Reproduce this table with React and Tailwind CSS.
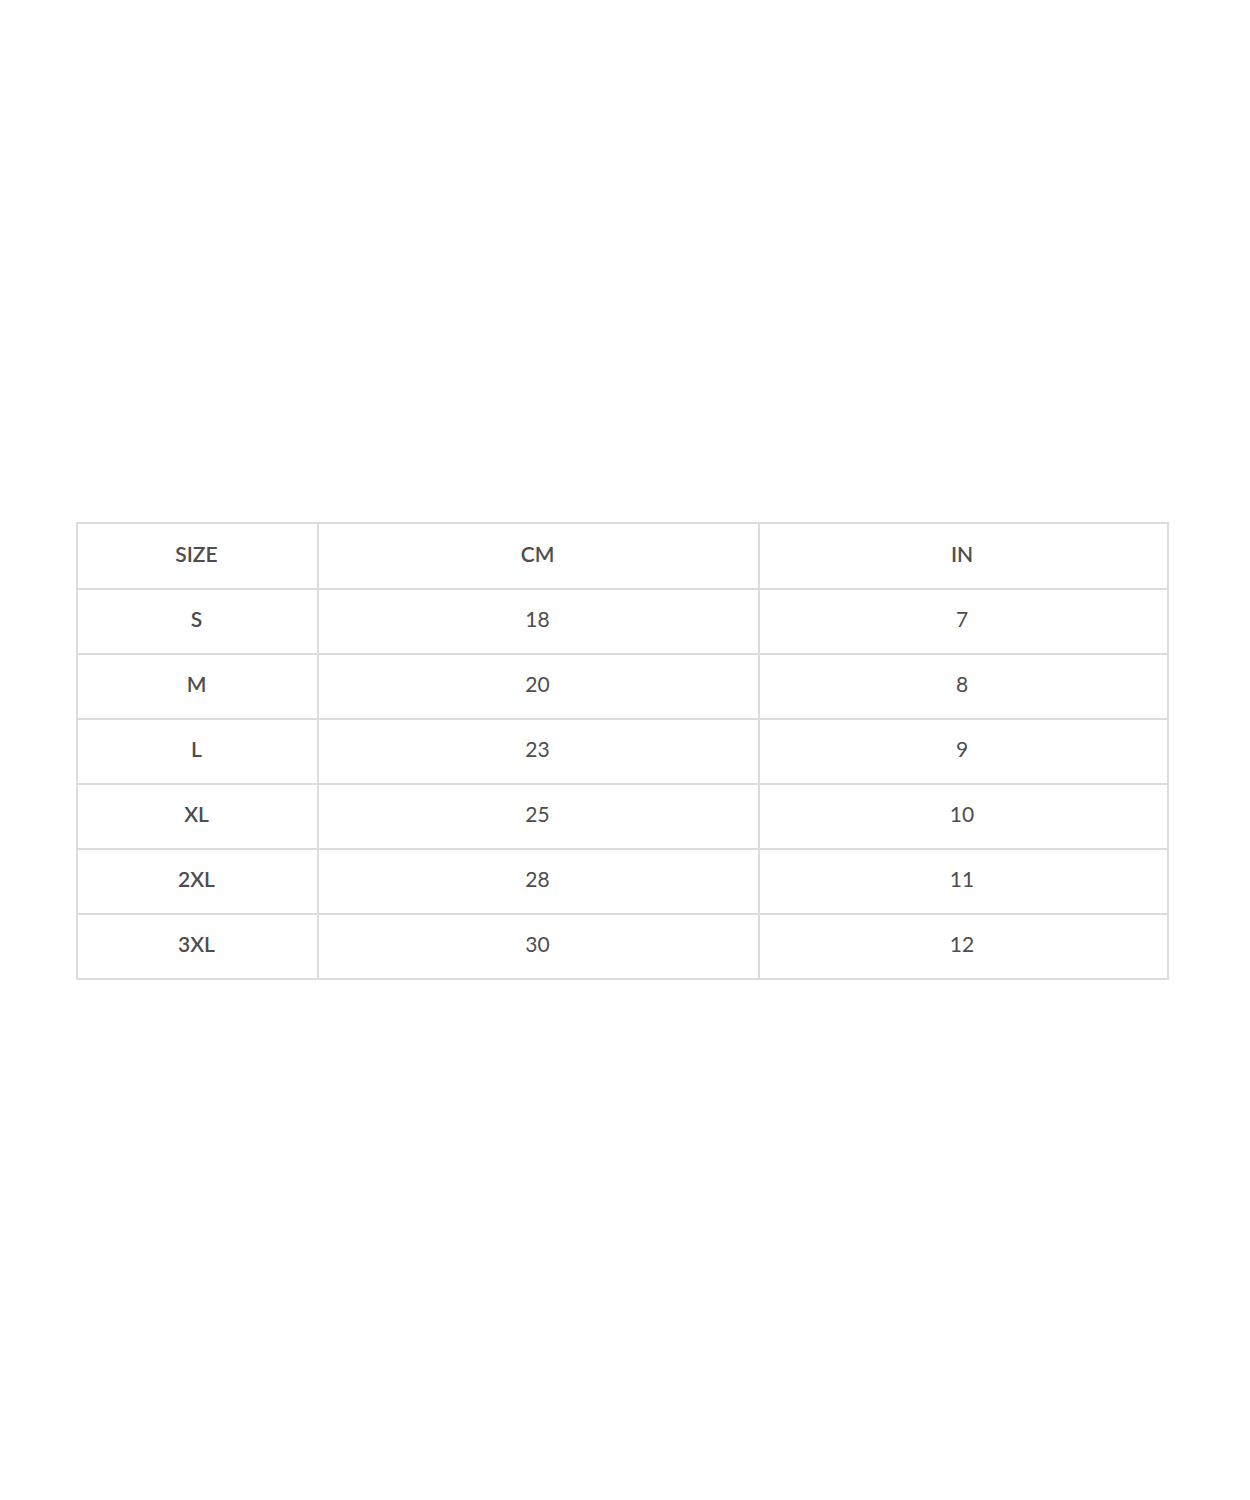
import React from "react";

const rows = [
  ["S", "18", "7"],
  ["M", "20", "8"],
  ["L", "23", "9"],
  ["XL", "25", "10"],
  ["2XL", "28", "11"],
  ["3XL", "30", "12"],
];

export default function App() {
  return (
    <div className="w-[1250px] h-[1500px] bg-white pt-[522px] pl-[76px]" style={{ fontFamily: "Lato, 'Open Sans', sans-serif" }}>
      <table className="border-collapse table-fixed w-[1091px] text-[21px] leading-none text-[#4d4d4d]">
        <colgroup>
          <col className="w-[241px]" />
          <col className="w-[441px]" />
          <col className="w-[409px]" />
        </colgroup>
        <thead>
          <tr className="h-[66px]">
            <th className="border-2 border-[#dcdcdc] font-semibold text-center pb-[5px] pr-[2px]">SIZE</th>
            <th className="border-2 border-[#dcdcdc] font-semibold text-center pb-[5px] pr-[2px]">CM</th>
            <th className="border-2 border-[#dcdcdc] font-semibold text-center pb-[5px] pr-[3px]">IN</th>
          </tr>
        </thead>
        <tbody>
          {rows.map((r) => (
            <tr key={r[0]} className="h-[65px]">
              <td className="border-2 border-[#dcdcdc] font-semibold text-center pb-[6px] pr-[2px]">{r[0]}</td>
              <td className="border-2 border-[#dcdcdc] font-normal text-center pb-[6px] pr-[2px]">{r[1]}</td>
              <td className="border-2 border-[#dcdcdc] font-normal text-center pb-[6px] pr-[3px]">{r[2]}</td>
            </tr>
          ))}
        </tbody>
      </table>
    </div>
  );
}
